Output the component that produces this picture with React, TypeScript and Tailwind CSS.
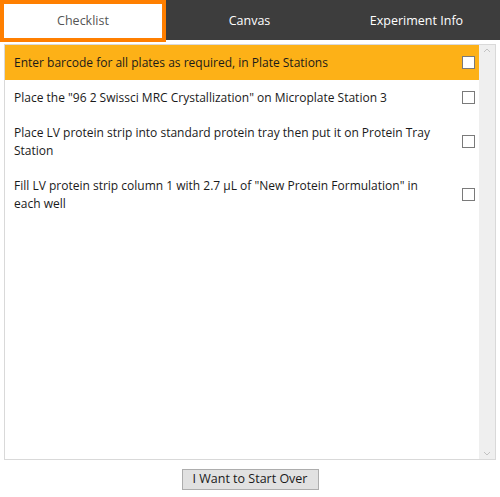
import { useState } from "react";

const tabs = ["Checklist", "Canvas", "Experiment Info"];

const steps = [
  "Enter barcode for all plates as required, in Plate Stations",
  'Place the "96 2 Swissci MRC Crystallization" on Microplate Station 3',
  "Place LV protein strip into standard protein tray then put it on Protein Tray Station",
  'Fill LV protein strip column 1 with 2.7 µL of "New Protein Formulation" in each well',
];

export default function App() {
  const [active, setActive] = useState(0);
  const [selected, setSelected] = useState(0);
  const [checked, setChecked] = useState<boolean[]>(steps.map(() => false));

  return (
    <div
      className="w-[500px] h-[497px] bg-white flex flex-col text-[12px] text-[#1a1a1a]"
      style={{ fontFamily: '"Segoe UI", "Open Sans", sans-serif' }}
    >
      {/* tabs */}
      <div className="flex h-[42px] bg-white">
        {tabs.map((t, i) => (
          <button
            key={t}
            onClick={() => setActive(i)}
            className={
              i === active
                ? "w-[166px] h-[42px] pt-[1px] bg-white border-4 border-[#ff7f00] text-[#555] text-[12.5px]"
                : "flex-1 h-[40px] pt-[2px] bg-[#3d3d3d] text-white text-[12.5px]"
            }
          >
            {t}
          </button>
        ))}
      </div>

      {/* checklist */}
      <div className="mt-[2px] mx-[4px] h-[416px] border border-[#d9d9d9] flex">
        <div className="flex-1 flex flex-col">
          {steps.map((s, i) => (
            <div
              key={i}
              onClick={() => setSelected(i)}
              className={
                "flex items-center pl-[9px] pr-[4px] py-[8.5px] " +
                (i === selected ? "bg-[#fdb117]" : "bg-white")
              }
            >
              <div className="flex-1 leading-[18px] pr-6">{s}</div>
              <button
                onClick={() =>
                  setChecked((c) => c.map((v, j) => (j === i ? !v : v)))
                }
                className="w-[13px] h-[13px] border border-[#7a7a7a] bg-white flex items-center justify-center text-[10px] leading-none"
              >
                {checked[i] ? "✓" : ""}
              </button>
            </div>
          ))}
        </div>
        <div className="w-[16px] bg-[#efefef] flex flex-col justify-between items-center py-[3px]">
          <svg width="8" height="5" viewBox="0 0 8 5">
            <path d="M1 4 L4 1 L7 4" fill="none" stroke="#c2c2c2" strokeWidth="1" />
          </svg>
          <svg width="8" height="5" viewBox="0 0 8 5">
            <path d="M1 1 L4 4 L7 1" fill="none" stroke="#c2c2c2" strokeWidth="1" />
          </svg>
        </div>
      </div>

      <div className="flex justify-center mt-[9px]">
        <button className="w-[137px] h-[21px] bg-[#e1e1e1] border border-[#adadad] text-[12.5px] leading-none text-[#1a1a1a]">
          I Want to Start Over
        </button>
      </div>
    </div>
  );
}
